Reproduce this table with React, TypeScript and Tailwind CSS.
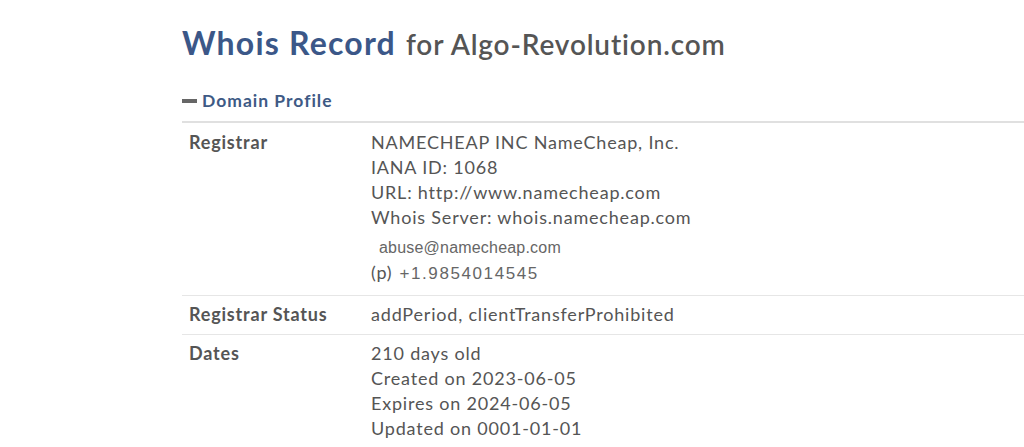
export default function App() {
  const lato = { fontFamily: 'Lato, "Open Sans", sans-serif' };
  const arial = { fontFamily: '"Liberation Sans", Arial, sans-serif' };
  return (
    <div className="w-[1024px] h-[447px] overflow-hidden bg-white" style={lato}>
      <div className="pl-[182px] pt-[23px]">
        <h1 className="flex items-baseline gap-[10px] h-[40px] leading-[40px] whitespace-nowrap">
          <span className="text-[32px] font-bold text-[#3b5788] tracking-[1.2px]">Whois Record</span>
          <span className="text-[28px] font-semibold text-[#555555] tracking-[0.85px]">for Algo-Revolution.com</span>
        </h1>
        <div className="mt-[26px] flex items-center gap-[5px] h-[24px]">
          <span className="block w-[15px] h-[4px] bg-[#666666]" />
          <span className="text-[17.5px] font-bold text-[#3e5a85] tracking-[1px]">Domain Profile</span>
        </div>
        <div className="mt-[8px] border-t-2 border-[#e0e0e0] text-[18px] text-[#555555] tracking-[0.8px]">
          <div className="flex pt-[7px] pb-[9px] border-b border-[#e6e6e6]">
            <div className="w-[189px] shrink-0 pl-[7px] font-bold leading-[25px]">Registrar</div>
            <div className="leading-[25px]">
              <div>NAMECHEAP INC NameCheap, Inc.</div>
              <div>IANA ID: 1068</div>
              <div>URL: http://www.namecheap.com</div>
              <div>Whois Server: whois.namecheap.com</div>
              <div className="mt-[5px] pl-[8px] text-[16px] tracking-[0.2px] text-[#666666]" style={arial}>abuse@namecheap.com</div>
              <div className="flex items-baseline gap-[7px]">
                <span>(p)</span>
                <span className="text-[17px] tracking-[1.6px] text-[#666666]" style={arial}>+1.9854014545</span>
              </div>
            </div>
          </div>
          <div className="flex pt-[6px] pb-[7px] border-b border-[#e6e6e6]">
            <div className="w-[189px] shrink-0 pl-[7px] font-bold leading-[25px]">Registrar Status</div>
            <div className="leading-[25px]">addPeriod, clientTransferProhibited</div>
          </div>
          <div className="flex pt-[6px]">
            <div className="w-[189px] shrink-0 pl-[7px] font-bold leading-[25px]">Dates</div>
            <div className="leading-[25px]">
              <div>210 days old</div>
              <div>Created on 2023-06-05</div>
              <div>Expires on 2024-06-05</div>
              <div>Updated on 0001-01-01</div>
            </div>
          </div>
        </div>
      </div>
    </div>
  );
}
